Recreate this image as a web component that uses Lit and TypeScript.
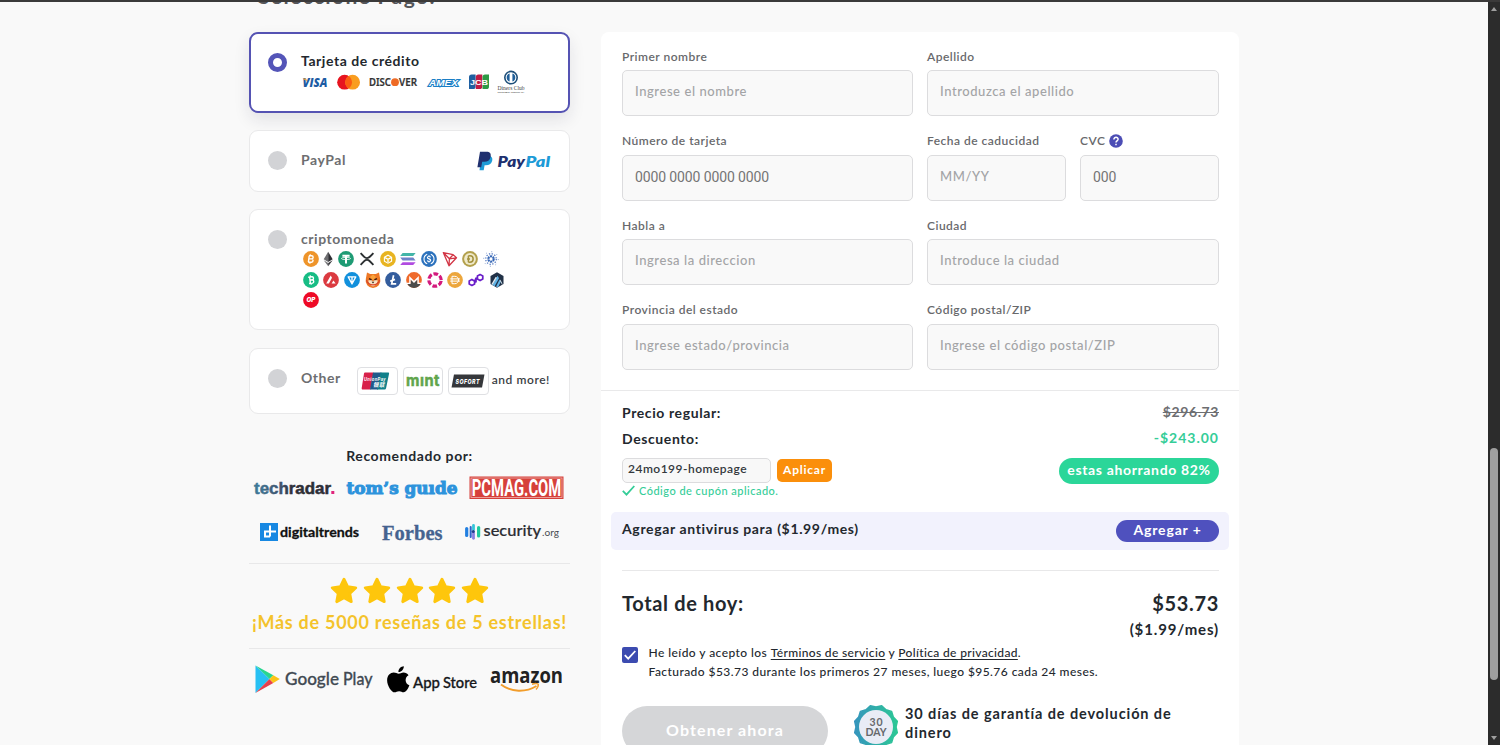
import { LitElement, html, svg, css } from "lit";
import { customElement, property } from "lit/decorators.js";
import { classMap } from "lit/directives/class-map.js";

// Text squeezed or stretched to a fixed width, used inside the logos
const word = (
  x: number,
  y: number,
  width: number,
  cls: string,
  text: string,
) => svg`<text x=${x} y=${y} textLength=${width} lengthAdjust="spacingAndGlyphs" class=${cls}>${text}</text>`;

const logo = (width: number, height: number, body: unknown) => html`
  <svg
    class="logo"
    width=${width}
    height=${height}
    viewBox="0 0 ${width} ${height}"
    >${body}</svg
  >
`;

const cardLogos = [
  logo(26, 24, svg`
    ${word(0.5, 16.5, 25, "visa", "VISA")}
    <path d="M.5 8.6h3.6l1.2 3z" fill="#e9a43a"/>`),
  logo(23, 24, svg`
    <circle cx="7.6" cy="12.2" r="7.4" fill="#e7141f"/>
    <circle cx="15.6" cy="12.2" r="7.4" fill="#f99d1f"/>
    <path d="M11.6 6a7.4 7.4 0 0 1 0 12.4a7.4 7.4 0 0 1 0-12.4z" fill="#fb5d12"/>`),
  logo(48, 24, svg`
    ${word(0, 16.2, 22, "discover", "DISC")}
    <circle cx="26" cy="12.2" r="3.9" fill="#ee6b26"/>
    ${word(30, 16.2, 18, "discover", "VER")}`),
  logo(32, 24, svg`${word(3, 15.9, 29, "amex", "AMEX")}`),
  logo(20, 24, svg`
    <path d="M3.6 4.5H7.6V16.5a2.6 2.6 0 0 1-2.6 2.6H1V7.1a2.6 2.6 0 0 1 2.6-2.6z" fill="#1f5fa0"/>
    <path d="M10.4 4.5H14.3V16.5a2.6 2.6 0 0 1-2.6 2.6H7.8V7.1a2.6 2.6 0 0 1 2.6-2.6z" fill="#bf1c45"/>
    <path d="M17.1 4.5H21V16.5a2.6 2.6 0 0 1-2.6 2.6H14.5V7.1a2.6 2.6 0 0 1 2.6-2.6z" fill="#2d9a45"/>
    ${word(2, 14.6, 18, "jcb", "JCB")}`),
  logo(28, 24, svg`
    <circle cx="14" cy="7.6" r="6.2" fill="#fff" stroke="#1e4f79" stroke-width="1.6"/>
    <path d="M12.6 3.6a4.2 4.2 0 0 0 0 8zM15.4 3.6a4.2 4.2 0 0 1 0 8z" fill="#1e5f9a"/>
    ${word(0.5, 20, 27, "diners", "Diners Club")}
    ${word(0.5, 23, 27, "diners-sub", "INTERNATIONAL")}`),
];

const coin = (fill: string, mark: unknown) => svg`
  <circle cx="8" cy="8" r="7.9" fill=${fill}/>${mark}`;

const coins = [
  coin("#ee942a", svg`<path d="M6.2 4.8l-.8 6.4M6 4.8h2.6a1.5 1.5 0 0 1 0 3.1H6M8.4 7.9a1.6 1.6 0 0 1 0 3.3H5.2M7.4 3.4l-.2 1.4M7 11.2l-.2 1.4" class="line" stroke-width="1.4"/>`),
  svg`
    <path d="M5.2.8L.7 8.3l4.5 2.6z" fill="#6d6d70"/>
    <path d="M5.2.8l4.5 7.5-4.5 2.6z" fill="#2e2e33"/>
    <path d="M.7 9.3l4.5 6v-3.4z" fill="#77777a"/>
    <path d="M9.7 9.3l-4.5 6v-3.4z" fill="#38383c"/>`,
  coin("#1e9b74", svg`
    <path d="M4.4 3.8h7.2v2H9v6.8H7V5.8H4.4z" fill="#fff"/>
    <ellipse cx="8" cy="7.5" rx="4.6" ry="1.1" class="line" stroke-width=".8"/>`),
  svg`<path d="M1.6 2.2l3.6 3.6a4 4 0 0 0 5.6 0l3.6-3.6M1.6 13.8l3.6-3.6a4 4 0 0 1 5.6 0l3.6 3.6" fill="none" stroke="#2b2f31" stroke-width="1.9"/>`,
  coin("#e8b421", svg`
    <path d="M4.4 6.2l3.6-2 3.6 2v4l-3.6 2-3.6-2z" class="line" stroke-width="1.1"/>
    <path d="M5 6.6l3 1.6 3-1.6M8 8.2V11" class="line" stroke-width="1.3"/>`),
  svg`
    <path d="M2.6 2H15.6l-2.4 2.9H.2z" fill="#43b5a8"/>
    <path d="M.2 6.6h13l2.4 2.9h-13z" fill="#6e82c8"/>
    <path d="M2.6 11.2h13l-2.4 2.9h-13z" fill="#b04be0"/>`,
  coin("#2c72bd", svg`
    <path d="M6.2 3.2a5.2 5.2 0 0 0 0 9.6M9.8 3.2a5.2 5.2 0 0 1 0 9.6" class="line" stroke-width="1.1"/>
    <path d="M9.6 6.3c-.5-1.1-3.3-1-3.2.4.1 1.5 3.3.9 3.3 2.5 0 1.5-2.9 1.5-3.4.3M8 4.2v1M8 10.4v1.2" class="line" stroke-width="1.1"/>`),
  svg`<path d="M1.3 1.6l9.8 2 3.4 3.2L7 14.8zM1.6 1.8l5.8 6 3.7-4M7.4 7.8l7-1M7.4 7.8L7 14.6" fill="none" stroke="#d23545" stroke-width="1.3" stroke-linejoin="round"/>`,
  coin("#b3a04c", svg`
    <circle cx="8" cy="8" r="5.9" fill="#efe9c9"/>
    <path d="M6.4 4.8v6.4M6.4 4.8h1.6c4.2 0 4.2 6.4 0 6.4H6.4M5 8h3" fill="none" stroke="#a3913e" stroke-width="1.5"/>`),
  svg`
    <circle cx="8" cy="8" r="2.7" fill="none" stroke="#3566b5" stroke-width="2.2" stroke-dasharray="2.2 .63"/>
    <circle cx="8" cy="8" r="5.3" fill="none" stroke="#5a7fc4" stroke-width="1.3" stroke-dasharray="1.3 1.475"/>
    <circle cx="8" cy="8" r="7.3" fill="none" stroke="#86a1d2" stroke-width="1" stroke-dasharray="1.1 4.63"/>`,
  coin("#17bc84", svg`<path d="M6.6 5l.8 6.4M5.2 5.2L8.8 4.8a1.5 1.5 0 0 1 .4 3L7 8.1M9.2 7.8a1.7 1.7 0 0 1 .4 3.3l-3.6.4M7.2 3.4l.2 1.4M8.2 11.2l.2 1.4" class="line" stroke-width="1.4"/>`),
  coin("#db3a40", svg`
    <path d="M7.7 3.4L9 5.7 5.9 11.5H3.2z" fill="#fff"/>
    <path d="M10.4 8.4l2.2 3.1H8.6z" fill="#fff"/>`),
  coin("#1290dc", svg`<path d="M4.2 4.9h7.6L8 12zM8 5v6.5" class="line" stroke-width="1.3" stroke-linejoin="round"/>`),
  svg`
    <path d="M2 .6L5.200 2h5.600L14 .6l1.200 6.400A7.300 7.300 0 0 1 8 15.900 7.300 7.300 0 0 1 .8 7z" fill="#ed7825"/>
    <path d="M5 5l3-2.500L11 5 8 8z" fill="#f8a33c"/>
    <path d="M3.200 8.500L6.500 8 8 9.500 9.500 8l3.300.5-1.200 4L8 14.500l-3.600-2z" fill="#f7e2c4"/>
    <path d="M4 6.600l2.600 1.200M12 6.600L9.400 7.800" stroke="#3a1d10" stroke-width="1.400"/>
    <path d="M1.400 8a6.900 6.900 0 0 0 13.200 0" fill="none" stroke="#d8482b" stroke-width="1.200"/>
    <path d="M6.700 9.700h2.600L8 11.500z" fill="#3a1d10"/>`,
  coin("#345d9d", svg`<path d="M8.6 3.2L6.7 11.8h4.5M5.2 9.2l4.8-1.8" class="line" stroke-width="1.7"/>`),
  svg`
    <circle cx="8" cy="8" r="7.9" fill="#ef6a2b"/>
    <path d="M1.1 11.6h3.6V7.2L8 10.5l3.3-3.3v4.4h3.6A7.9 7.9 0 0 1 8 15.9a7.9 7.9 0 0 1-6.9-4.3z" fill="#4c4c4c"/>
    <path d="M0 10.8h3.2V4L8 8.8 12.8 4v6.8H16l-.8 1.3h-3.8V7.6L8 11 4.6 7.6v4.5H.8z" fill="#fff"/>`,
  svg`<circle cx="8" cy="8" r="6.2" fill="none" stroke="#d31a7d" stroke-width="3.2" stroke-dasharray="4.7 1.793" stroke-dashoffset="-.9"/>`,
  coin("#eca63c", svg`<path d="M5 4.3h2.8c5 0 5 7.4 0 7.4H5zM3.2 6.9h9.7M3.2 9.1h9.7" class="line" stroke-width="1"/>`),
  svg`<path d="M6.6 9.6v2.3L3.9 13.4 1.2 11.9V8.9l2.7-1.500L8 9.900V6L6.600 9.600M9.400 6.400V4.100l2.700-1.500 2.700 1.500v3l-2.700 1.500L8 6.200" fill="none" stroke="#6a1fc9" stroke-width="1.7" stroke-linejoin="round"/>`,
  svg`
    <path d="M8 .3l6.5 3.8v7.8L8 15.7 1.5 11.9V4.1z" fill="#213147"/>
    <path d="M8.6 3.8L3.4 13l2.2 1.3L10 6.2zM10.6 7.4L7 14.8l2.2.2 2.6-5.2z" fill="#5fb3e6"/>
    <path d="M6.6 5L2.500 12l1.200.8L8 5.500zM11.3 7.500l2 4v1.500L11 9z" fill="#dbe7ef"/>`,
  coin("#ee0a26", svg`${word(3.6, 10.1, 8.8, "op", "OP")}`),
];

const coinIcon = (body: unknown, index: number) => {
  // the ether mark is narrower than the round coins
  const width = index === 1 ? 10.4 : 16;
  return html`<svg width=${width} height="16" viewBox="0 0 ${width} 16">${body}</svg>`;
};

const paypalLogo = logo(74, 20, svg`
  <path d="M5.500 4.700h6.200c3.800 0 5.300 2 4.400 5.300-.9 3.100-3 4.200-6.200 4.200H8.600l-.9 5H3.500z" fill="#1d9bd7"/>
  <path d="M4 .8h6.300c3.700 0 5 1.900 4.300 5.100-.8 3.400-3 4.800-6.300 4.800H6.200l-1 5.600H1.400z" fill="#20306f"/>
  ${word(21.5, 15.5, 27.5, "pay navy", "Pay")}
  ${word(49.5, 15.5, 24.5, "pay cyan", "Pal")}`);

const otherLogos = [
  logo(28, 18, svg`
    <g transform="translate(-1.500)">
      <path d="M3.5.5H12L9 17.5H1.5C.6 17.5 0 17 .2 16L2.5 1.5Q2.7.5 3.5.5z" fill="#d8204a"/>
      <path d="M11.5.5H20l-3.5 17h-8z" fill="#215a8b"/>
      <path d="M19 .5h7.8q1 0 .8 1L24.6 16q-.3 1.5-1.5 1.5h-7.6z" fill="#10808a"/>
      ${word(2.5, 9, 22, "union", "UnionPay")}
      ${word(11.5, 15, 12, "union cjk", "银联")}
    </g>`),
  logo(34, 18, svg`${word(0, 14, 34, "mint", "mınt")}`),
  logo(34, 14, svg`
    <path d="M3 .5h30.5L31 13.5H.5z" fill="#35373b"/>
    ${word(4.5, 9.6, 24.5, "sofort", "SOFORT")}`),
];

const pressTop = [
  logo(81, 26, svg`
    <defs><linearGradient id="tr"><stop offset="0" stop-color="#3f7c9b"/><stop offset=".35" stop-color="#40526b"/><stop offset=".5" stop-color="#2c2e36"/></linearGradient></defs>
    ${word(0, 19, 77, "techradar", "techradar")}
    <rect x="77.3" y="16" width="3" height="3" fill="#e0247c"/>`),
  logo(112, 26, svg`${word(0.5, 18.5, 111, "toms", "tom’s guıde")}`),
  logo(95, 26, svg`
    <rect x=".5" y="1.5" width="94" height="22.5" fill="#d6403a"/>
    <rect x="2" y="3" width="91" height="19.5" fill="none" stroke="#efb5b0" stroke-width=".8"/>
    ${word(2.8, 20.8, 89.5, "pcmag", "PCMAG.COM")}`),
];

const pressBottom = [
  logo(100, 26, svg`
    <rect x="0" y="4" width="18" height="18" fill="#1788e2"/>
    <path d="M10 6.5v11M9 12.5h7M10 12.5H5v5h5" fill="none" stroke="#fff" stroke-width="2"/>
    ${word(20, 17.5, 79, "digital", "digitaltrends")}`),
  logo(61, 26, svg`${word(0, 20.8, 60.5, "forbes", "Forbes")}`),
  logo(94, 26, svg`
    <path d="M1.7 9.5v7" stroke="#227fe0" stroke-width="3.2" stroke-linecap="round"/>
    <path d="M5.7 8v10" stroke="#2f63c9" stroke-width="2" stroke-linecap="round"/>
    <path d="M8.5 6.5v4" stroke="#36c6d9" stroke-width="2.8" stroke-linecap="round"/>
    <path d="M8.5 14.5v4.8" stroke="#8a7fe0" stroke-width="2.8" stroke-linecap="round"/>
    <path d="M13.6 8.5v8.5" stroke="#1fc9a0" stroke-width="3.2" stroke-linecap="round"/>
    <circle cx="8.3" cy="12.5" r="1.6" fill="#203c8e"/>
    ${word(18.5, 17, 57.5, "security", "security")}
    ${word(77, 17, 17, "security-tld", ".org")}`),
];

const stores = [
  logo(117, 32, svg`
    <path d="M-.5 1.500L13.500 15-.5 29z" fill="#27c0f3"/>
    <path d="M-.5 1.500l17.800 9.700L13.500 15z" fill="#28d68f"/>
    <path d="M-.5 29l17.800-9.900L13.500 15z" fill="#e8404d"/>
    <path d="M17.300 11.200l6.500 3.900-6.500 4L13.500 15z" fill="#fbc318"/>
    ${word(29, 21, 54, "play", "Google")}
    ${word(87, 21, 29.5, "play", "Play")}`),
  logo(90, 32, svg`
    <path d="M16.4 2.2c.2 2.8-2.3 5.6-5.1 5.5C11 5 13.6 2.2 16.4 2.2zM11.5 9.2c1.3 0 2.6-1.2 4.7-1.2 1.8 0 3.6 1 4.7 2.6-4.1 2.3-3.500 8 .8 9.700-.9 2.500-3 6.700-5.500 6.700-1.700 0-2.200-1.100-4.300-1.100s-2.700 1.100-4.300 1.100C4.700 27 .5 20.500.5 15.600.5 10.700 3.700 8.100 6.700 8.100c2 0 3.500 1.100 4.800 1.100z" transform="translate(-.4) scale(1.05)"/>
    ${word(26, 23.5, 27, "app", "App")}
    ${word(56, 23.5, 34, "app", "Store")}`),
  logo(73, 32, svg`
    ${word(0, 18.5, 73, "amazon", "amazon")}
    <path d="M11 20.5c10 8 25 8 35.5 1.500" fill="none" stroke="#f29d2b" stroke-width="1.9"/>
    <path d="M42 20.3c3-1 6-.8 6.200 0s-.6 3.500-2.200 5.200" fill="none" stroke="#f29d2b" stroke-width="1.5"/>`),
];

@customElement("pay-option")
export class PayOption extends LitElement {
  @property({ type: String }) label = "";
  @property({ type: Boolean, reflect: true }) selected = false;

  static styles = css`
    :host {
      display: flex;
      box-sizing: border-box;
      padding: 0 19px 0 18px;
      border: 1px solid #e9e9ea;
      border-radius: 9px;
      background: #fff;
      color: #6d6e71;
    }

    :host([selected]) {
      padding: 0 18px 0 17px;
      border: 2px solid #5553b3;
      color: #23282e;
      box-shadow: 0 7px 16px rgba(30, 30, 60, 0.1);
    }

    .radio {
      flex: none;
      box-sizing: border-box;
      width: 19px;
      height: 19px;
      margin-right: 13px;
      border-radius: 50%;
      background: #d2d3d6;
    }

    .radio.on {
      border: 5.5px solid #5455b8;
      background: #fff;
    }

    .body {
      display: flex;
      flex-direction: column;
      flex: 1;
    }

    .label {
      padding-left: 1px;
      font-size: 14px;
      font-weight: 700;
      letter-spacing: 0.55px;
      line-height: 18px;
    }

    :host([selected]) .label {
      margin: -1px 0 1px;
    }
  `;

  render() {
    return html`
      <span class=${classMap({ radio: true, on: this.selected })}></span>
      <div class="body">
        <span class="label">${this.label}</span>
        <slot></slot>
      </div>
      <slot name="end"></slot>
    `;
  }
}

@customElement("form-field")
export class FormField extends LitElement {
  @property({ type: String }) label = "";
  @property({ type: String }) placeholder = "";
  @property({ type: Boolean }) numeric = false;
  @property({ type: Boolean }) help = false;

  static styles = css`
    :host {
      display: flex;
      flex-direction: column;
      height: 84.6px;
    }

    label {
      display: flex;
      align-items: center;
      gap: 4px;
      box-sizing: border-box;
      height: 25px;
      padding-bottom: 3px;
      font-size: 12px;
      font-weight: 600;
      letter-spacing: 0.48px;
      color: #68696c;
    }

    input {
      box-sizing: border-box;
      width: 100%;
      height: 46px;
      padding: 0 12px 4px;
      border: 1px solid #dcdcde;
      border-radius: 5px;
      background: #f9f9f9;
      font: 500 13px Lato, "Liberation Sans", sans-serif;
      letter-spacing: 0.57px;
      outline: none;
    }

    input::placeholder {
      color: #a3a4a6;
      opacity: 1;
    }

    input.numeric {
      padding: 0 13px 2px 12px;
      font: 14px Roboto, "Liberation Sans", sans-serif;
      letter-spacing: -0.12px;
    }

    input.numeric::placeholder {
      color: #757575;
    }
  `;

  render() {
    return html`
      <label
        >${this.label}
        ${this.help
          ? html`<svg width="14" height="14" viewBox="0 0 14 14">
              <circle cx="7" cy="7" r="6.8" fill="#4c4db5" />
              <path
                d="M4.9 5.4c0-2.8 4.3-2.6 4.2-.1C9 6.9 7 6.9 7 8.6M7 9.8v1.5"
                fill="none"
                stroke="#fff"
                stroke-width="1.5"
              />
            </svg>`
          : ""}</label
      >
      <input
        class=${classMap({ numeric: this.numeric })}
        placeholder=${this.placeholder}
      />
    `;
  }
}

@customElement("app-root")
export class AppRoot extends LitElement {
  static styles = css`
    :host {
      display: flex;
      box-sizing: border-box;
      width: 1500px;
      height: 745px;
      overflow: hidden;
      border-top: 2px solid #3b3a3a;
      background: #f9f9f9;
      font-family: Lato, "Liberation Sans", sans-serif;
      color: #23282e;
    }

    main {
      display: flex;
      gap: 31px;
      flex: 1;
      padding-left: 249px;
    }

    .scrollbar {
      display: flex;
      flex-direction: column;
      align-items: center;
      box-sizing: border-box;
      width: 12px;
      padding: 5px 2px;
      background: #2c2c2c;
    }

    .thumb {
      width: 8px;
      height: 232px;
      margin: 437px 0 auto;
      border-radius: 4px;
      background: #9f9f9f;
    }

    svg {
      display: block;
      flex: none;
      overflow: visible;
    }

    /* left column */
    .methods {
      display: flex;
      flex-direction: column;
      width: 321px;
    }

    h2 {
      height: 30px;
      margin: -19px 0 19px 9px;
      font-size: 21px;
      font-weight: 700;
      letter-spacing: 1.35px;
      line-height: 26px;
      color: #55565a;
    }

    pay-option {
      flex: none;
      margin-bottom: 17px;
    }

    .card {
      height: 81px;
      padding-top: 19px;
    }

    .card-logos {
      display: flex;
      gap: 9.3px;
      margin: -1px 0 0 1.5px;
    }

    .paypal {
      height: 62px;
      padding-top: 20px;
      margin-bottom: 17px;
    }

    .crypto {
      height: 121px;
      padding-top: 20px;
      margin-bottom: 18px;
    }

    .coins {
      display: flex;
      flex-wrap: wrap;
      gap: 4.6px 4.7px;
      width: 206px;
      margin: 3px 0 0 2.5px;
    }

    .other {
      height: 66px;
      padding-top: 20px;
      margin-bottom: 33px;
    }

    .brands {
      display: flex;
      align-items: center;
      gap: 5px;
      height: 28px;
      margin-top: -2px;
      font-size: 12px;
      font-weight: 600;
      letter-spacing: 0.57px;
      color: #3a3e44;
    }

    .brand {
      display: flex;
      align-items: center;
      justify-content: center;
      box-sizing: border-box;
      width: 40.5px;
      height: 28px;
      border: 1px solid #dfe0e3;
      border-radius: 4px;
    }

    .brands .more {
      margin: -3px 0 0 -2px;
      white-space: nowrap;
    }

    .recommended {
      font-size: 14px;
      font-weight: 700;
      letter-spacing: 0.6px;
      line-height: 18px;
      text-align: center;
    }

    .press {
      display: flex;
      justify-content: space-between;
      padding: 0 6px 0 5px;
      margin-top: 10px;
    }

    .press.second {
      padding: 0 11px;
      margin-top: 18px;
    }

    .reviews {
      display: flex;
      flex-direction: column;
      align-items: center;
      box-sizing: border-box;
      height: 86px;
      margin-top: 18px;
      border: solid #e8e8e9;
      border-width: 1px 0;
      font-size: 18px;
      font-weight: 700;
      letter-spacing: 0.73px;
      line-height: 24px;
      white-space: nowrap;
      color: #f4c32b;
    }

    .stars {
      display: flex;
      gap: 4.6px;
      margin: 13px 0 5px;
    }

    .stores {
      display: flex;
      justify-content: space-between;
      padding: 0 7px;
      margin-top: 15px;
    }

    /* right column */
    .checkout {
      box-sizing: border-box;
      width: 638px;
      height: 760px;
      margin-top: 30px;
      border-radius: 8px;
      background: #fff;
    }

    .fields {
      display: grid;
      grid-template-columns: 1fr 139px 139px;
      align-content: start;
      column-gap: 14px;
      box-sizing: border-box;
      height: 359px;
      padding: 13px 20px 0 21px;
      border-bottom: 1px solid #e9e9ea;
    }

    .wide {
      grid-column: span 2;
    }

    .summary {
      padding: 9px 20px 0 21px;
    }

    .line {
      display: flex;
      justify-content: space-between;
      height: 26px;
      font-size: 14px;
      font-weight: 700;
      letter-spacing: 0.6px;
      line-height: 26px;
    }

    .old {
      margin-top: -1px;
      color: #6d6e71;
      text-decoration: line-through;
    }

    .green {
      margin-top: -1px;
      letter-spacing: 1px;
      color: #35cd98;
    }

    .coupon {
      display: flex;
      align-items: center;
      height: 26px;
      margin-top: 6px;
    }

    .coupon input {
      box-sizing: border-box;
      width: 149px;
      height: 25px;
      padding: 0 5px 4px;
      margin: 0 6px 1px 0;
      border: 1px solid #dcdcde;
      border-radius: 5px;
      background: #f8f8f8;
      font: 600 12px Lato, "Liberation Sans", sans-serif;
      letter-spacing: 0.48px;
      color: #34383d;
    }

    button {
      padding: 0;
      border: 0;
      font: 700 13px/1 Lato, "Liberation Sans", sans-serif;
      letter-spacing: 0.5px;
      color: #fff;
    }

    .apply {
      width: 55px;
      height: 23px;
      padding-bottom: 2px;
      margin-bottom: 1px;
      border-radius: 5px;
      background: #fb8f0b;
      font-size: 12px;
      letter-spacing: 0.75px;
    }

    .saving {
      width: 160px;
      height: 26px;
      margin-left: auto;
      border-radius: 13px;
      background: #2bd699;
      font-size: 14px;
      font-weight: 700;
      letter-spacing: 0.65px;
      line-height: 23px;
      text-align: center;
      color: #fff;
    }

    .applied {
      display: flex;
      align-items: center;
      gap: 4px;
      height: 14px;
      margin-top: -1px;
      font-size: 11px;
      font-weight: 500;
      letter-spacing: 0.48px;
      color: #35cd98;
    }

    .antivirus {
      display: flex;
      align-items: center;
      justify-content: space-between;
      box-sizing: border-box;
      height: 38px;
      padding: 0 10px 1px 11px;
      margin: 15px -10px 20px -11px;
      border-radius: 5px;
      background: #f2f2fd;
      font-size: 14px;
      font-weight: 700;
      letter-spacing: 0.64px;
    }

    .antivirus span {
      margin-top: -4px;
    }

    .add {
      width: 103px;
      height: 22px;
      padding-bottom: 1px;
      border-radius: 11px;
      background: #4f51be;
      font-size: 14px;
      letter-spacing: 0.85px;
    }

    .total {
      display: flex;
      justify-content: space-between;
      padding-top: 17px;
      border-top: 1px solid #e8e8e9;
      font-size: 20px;
      font-weight: 700;
      letter-spacing: 0.65px;
      line-height: 30px;
    }

    .monthly {
      font-size: 15px;
      font-weight: 700;
      letter-spacing: 0.85px;
      line-height: 22px;
      text-align: right;
    }

    .terms {
      display: flex;
      gap: 10.5px;
      margin-top: 4px;
      font-size: 12px;
      font-weight: 500;
      letter-spacing: 0.44px;
      line-height: 18.6px;
    }

    .terms svg {
      margin-top: 2.5px;
    }

    .terms p {
      margin: 0;
    }

    .terms u {
      letter-spacing: 0.34px;
      text-underline-offset: 2px;
    }

    .submit {
      display: flex;
      margin-top: 25px;
    }

    .get {
      flex: none;
      width: 206px;
      height: 50px;
      padding-bottom: 2px;
      border-radius: 25px;
      background: #d5d6d8;
      font-size: 16px;
      letter-spacing: 1.1px;
    }

    .seal {
      margin: -1px 7px 0 26px;
    }

    .guarantee {
      width: 280px;
      margin: -2px 0 0;
      font-size: 14.5px;
      font-weight: 700;
      letter-spacing: 0.9px;
      line-height: 19px;
    }

    /* logo lettering */
    .visa { font: italic 800 11.5px "Open Sans"; fill: #1c5ba3; }
    .discover { font: 600 10.5px "Noto Sans"; fill: #333; stroke: #333; stroke-width: 0.2px; }
    .amex {
      font: italic 700 9.5px "Liberation Sans";
      fill: #fff;
      stroke: #1b7fc6;
      stroke-width: 2.2px;
      paint-order: stroke;
    }
    .jcb { font: 700 8px "Liberation Sans"; fill: #fff; }
    .diners { font: 6.5px "Liberation Serif"; fill: #444; }
    .diners-sub { font: 700 2.8px "Liberation Serif"; fill: #333; }
    svg .line { fill: none; stroke: #fff; }
    .op { font: italic 900 6px Inter; fill: #fff; }
    .pay { font: italic 800 15px Lato; }
    .navy { fill: #20306f; }
    .cyan { fill: #1d9bd7; }
    .union { font: italic 700 6px "Liberation Sans"; fill: #fff; }
    .cjk { font-family: "Noto Sans CJK SC", sans-serif; }
    .mint { font: 700 16px Inter; fill: #61a54c; stroke: #61a54c; stroke-width: 0.5px; }
    .sofort { font: italic 800 6.5px Inter; fill: #fff; }
    .techradar {
      font: 700 17px "Liberation Sans";
      fill: url(#tr);
      stroke: url(#tr);
      stroke-width: 0.5px;
    }
    .toms {
      font: 700 17.5px "DejaVu Serif";
      fill: #2d93dc;
      stroke: #2d93dc;
      stroke-width: 1.1px;
    }
    .pcmag { font: 700 23px Roboto; fill: #fff; }
    .digital { font: 700 13.5px Lato; fill: #111; stroke: #111; stroke-width: 0.3px; }
    .forbes {
      font: 700 22px "Liberation Serif";
      fill: #456390;
      stroke: #456390;
      stroke-width: 0.3px;
    }
    .security { font: 500 16px Lato; fill: #2b2d33; stroke: #2b2d33; stroke-width: 0.2px; }
    .security-tld { font: 10px Lato; fill: #4a4c52; }
    .play { font: 500 18px Lato; fill: #414a53; stroke: #414a53; stroke-width: 0.3px; }
    .app { font: 500 14.5px Lato; fill: #16181b; stroke: #16181b; stroke-width: 0.3px; }
    .amazon { font: 700 20.5px "Open Sans"; fill: #222; }
    .seal-text { font: 700 10.5px Lato; fill: #66686c; }
  `;

  private renderStar() {
    return html`<svg width="28" height="28" viewBox="0 0 28 28">
      <path
        d="M14 2.2l3.6 7.5 8.2 1.1-6 5.7 1.5 8.2L14 20.8l-7.3 3.9 1.5-8.2-6-5.7 8.2-1.1z"
        fill="#fec60c"
        stroke="#fec60c"
        stroke-width="2.8"
        stroke-linejoin="round"
      />
    </svg>`;
  }

  private renderMethods() {
    return html`
      <section class="methods">
        <h2>Seleccione Pago:</h2>
        <pay-option class="card" label="Tarjeta de crédito" selected>
          <div class="card-logos">${cardLogos}</div>
        </pay-option>
        <pay-option class="paypal" label="PayPal">
          <span slot="end">${paypalLogo}</span>
        </pay-option>
        <pay-option class="crypto" label="criptomoneda">
          <div class="coins">${coins.map(coinIcon)}</div>
        </pay-option>
        <pay-option class="other" label="Other">
          <div class="brands" slot="end">
            ${otherLogos.map((brand) => html`<span class="brand">${brand}</span>`)}
            <span class="more">and more!</span>
          </div>
        </pay-option>

        <div class="recommended">Recomendado por:</div>
        <div class="press">${pressTop}</div>
        <div class="press second">${pressBottom}</div>
        <div class="reviews">
          <div class="stars">${[1, 2, 3, 4, 5].map(() => this.renderStar())}</div>
          <span>¡Más de 5000 reseñas de 5 estrellas!</span>
        </div>
        <div class="stores">${stores}</div>
      </section>
    `;
  }

  private renderSeal() {
    // twelve shallow bumps around the ring
    const points = Array.from({ length: 24 }, (_, i) => {
      const r = i % 2 ? 20 : 22;
      const a = (i * Math.PI) / 12 + Math.PI / 12;
      return `${(22 + r * Math.cos(a)).toFixed(1)},${(22 + r * Math.sin(a)).toFixed(1)}`;
    }).join(" ");
    return html`<svg class="seal" width="44" height="44" viewBox="0 0 44 44">
      <defs>
        <linearGradient id="ring">
          <stop offset="0" stop-color="#3595bd" />
          <stop offset="1" stop-color="#2cc795" />
        </linearGradient>
      </defs>
      <polygon
        points=${points}
        fill="url(#ring)"
        stroke="url(#ring)"
        stroke-width="1.5"
        stroke-linejoin="round"
      />
      <circle cx="22" cy="22" r="17" fill="#e9ecf6" />
      <text class="seal-text" x="15.5" y="20.5" textLength="13">30</text>
      <text class="seal-text" x="11.5" y="31" textLength="21">DAY</text>
    </svg>`;
  }

  private renderCheckout() {
    return html`
      <section class="checkout">
        <div class="fields">
          <form-field label="Primer nombre" placeholder="Ingrese el nombre"></form-field>
          <form-field class="wide" label="Apellido" placeholder="Introduzca el apellido"></form-field>
          <form-field label="Número de tarjeta" placeholder="0000 0000 0000 0000" numeric></form-field>
          <form-field label="Fecha de caducidad" placeholder="MM/YY"></form-field>
          <form-field label="CVC" placeholder="000" numeric help></form-field>
          <form-field label="Habla a" placeholder="Ingresa la direccion"></form-field>
          <form-field class="wide" label="Ciudad" placeholder="Introduce la ciudad"></form-field>
          <form-field label="Provincia del estado" placeholder="Ingrese estado/provincia"></form-field>
          <form-field class="wide" label="Código postal/ZIP" placeholder="Ingrese el código postal/ZIP"></form-field>
        </div>

        <div class="summary">
          <div class="line"><span>Precio regular:</span><span class="old">$296.73</span></div>
          <div class="line"><span>Descuento:</span><span class="green">-$243.00</span></div>
          <div class="coupon">
            <input value="24mo199-homepage" />
            <button class="apply">Aplicar</button>
            <span class="saving">estas ahorrando 82%</span>
          </div>
          <div class="applied">
            <svg width="13" height="11" viewBox="0 0 13 11">
              <path d="M.8 5.8l3.7 3.9L12.3 1" fill="none" stroke="#35cd98" stroke-width="1.8" />
            </svg>
            Código de cupón aplicado.
          </div>
          <div class="antivirus">
            <span>Agregar antivirus para ($1.99/mes)</span>
            <button class="add">Agregar +</button>
          </div>
          <div class="total"><span>Total de hoy:</span><span>$53.73</span></div>
          <div class="monthly">($1.99/mes)</div>
          <div class="terms">
            <svg width="16" height="16" viewBox="0 0 16 16">
              <rect width="16" height="16" rx="2" fill="#3c4bb0" />
              <path d="M2.8 8.2l3.4 3.4L13.3 4" fill="none" stroke="#fff" stroke-width="1.8" />
            </svg>
            <p>
              He leído y acepto los <u>Términos de servicio</u> y
              <u>Política de privacidad</u>.<br />
              Facturado $53.73 durante los primeros 27 meses, luego $95.76 cada 24 meses.
            </p>
          </div>
          <div class="submit">
            <button class="get">Obtener ahora</button>
            ${this.renderSeal()}
            <p class="guarantee">30 días de garantía de devolución de dinero</p>
          </div>
        </div>
      </section>
    `;
  }

  render() {
    return html`
      <main>${this.renderMethods()} ${this.renderCheckout()}</main>
      <div class="scrollbar">
        <svg width="6" height="4" viewBox="0 0 6 4"><path d="M0 4l3-4 3 4z" fill="#9f9f9f" /></svg>
        <div class="thumb"></div>
        <svg width="6" height="4" viewBox="0 0 6 4"><path d="M0 0l3 4 3-4z" fill="#9f9f9f" /></svg>
      </div>
    `;
  }
}
